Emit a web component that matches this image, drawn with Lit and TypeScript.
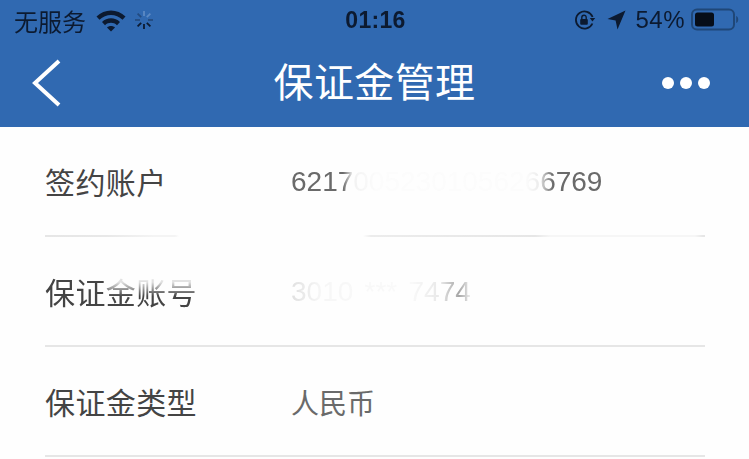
import { LitElement, html, css } from "lit";
import { customElement } from "lit/decorators.js";

@customElement("app-root")
export class AppRoot extends LitElement {
  static styles = css`
    :host { display: block; width: 749px; height: 459px; overflow: hidden; background: #fefefe;
      font-family: "Liberation Sans", "Noto Sans CJK SC", sans-serif; }
    header { height: 127px; background: #3069b1; display: flex; flex-direction: column; }
    .status { height: 40px; display: grid; grid-template-columns: 1fr auto 1fr; align-items: center;
      padding: 0 10px 0 14px; color: #0c1a30; font-size: 24px; filter: blur(.3px); }
    .left, .right { display: flex; align-items: center; }
    .right { justify-content: flex-end; }
    .carrier { margin-right: 10px; }
    .spin { margin-left: 8px; }
    .time { font-weight: 700; font-size: 23px; letter-spacing: .3px; margin-left: -2px; }
    .pct { margin: 0 6px 0 9px; letter-spacing: .5px; }
    .loc { margin-left: 11px; }
    .nav { flex: 1; display: grid; grid-template-columns: 1fr auto 1fr; align-items: center; padding: 0 39px 1px 32px; }
    .title { color: #fff; font-size: 40px; line-height: 48px; letter-spacing: .4px; margin-left: 7px; }
    .more { justify-self: end; display: flex; gap: 6px; }
    .more i { width: 12px; height: 12px; border-radius: 50%; background: #fff; display: block; }
    .row { height: 108px; padding: 0 44px 0 45px; display: flex; align-items: center; }
    .label { width: 246px; font-size: 30px; letter-spacing: .4px; color: #444; white-space: nowrap; }
    .value { font-size: 28px; color: #6a6a6a; white-space: nowrap; margin-top: 2px; }
    .rule { height: 2px; margin: 0 44px 0 45px; background: #e6e6e6; }
    .v1 { -webkit-mask-image: linear-gradient(90deg, #000 0, #000 52px, rgba(0,0,0,.08) 62px, rgba(0,0,0,.015) 85px, rgba(0,0,0,.015) 235px, rgba(0,0,0,.12) 248px, #000 262px);
      mask-image: linear-gradient(90deg, #000 0, #000 52px, rgba(0,0,0,.08) 62px, rgba(0,0,0,.015) 85px, rgba(0,0,0,.015) 235px, rgba(0,0,0,.12) 248px, #000 262px); }
    .v2 { word-spacing: 3.5px;
      -webkit-mask-image: linear-gradient(90deg, rgba(0,0,0,.2) 0, rgba(0,0,0,.05) 30px, rgba(0,0,0,.03) 120px, rgba(0,0,0,.15) 150px, rgba(0,0,0,.6) 168px, rgba(0,0,0,.12) 179px);
      mask-image: linear-gradient(90deg, rgba(0,0,0,.2) 0, rgba(0,0,0,.05) 30px, rgba(0,0,0,.03) 120px, rgba(0,0,0,.15) 150px, rgba(0,0,0,.6) 168px, rgba(0,0,0,.12) 179px); }
    .l2 { -webkit-mask-image: linear-gradient(90deg, #000 0, #000 60px, transparent 64px), linear-gradient(180deg, rgba(0,0,0,.15) 30%, #000 62%);
      mask-image: linear-gradient(90deg, #000 0, #000 60px, transparent 64px), linear-gradient(180deg, rgba(0,0,0,.15) 30%, #000 62%); }
    .r1 { background: linear-gradient(90deg, #e6e6e6 0, #e8e8e8 60px, #f4f4f4 110px, #f4f4f4 130px, #fefefe 134px,
      #fefefe 318px, #ececec 326px, #e6e6e6 490px, #f6f6f6 505px, #f6f6f6 650px, #e6e6e6 658px); }
  `;

  render() {
    return html`
      <header>
        <div class="status">
          <div class="left">
            <span class="carrier">无服务</span>
            <svg width="30" height="24" viewBox="0 0 30 24" fill="#0c1a30">
              <path d="M0.5 8.5 C8.5 0.5 21.5 0.5 29.5 8.5 L26.500 11.800 C20 5.500 10 5.500 3.500 11.800 Z"/>
              <path d="M6 14 C11 9 19 9 24 14 L21 17.200 C17.500 14 12.500 14 9 17.200 Z"/>
              <path d="M11 19.500 C13 17.500 17 17.500 19 19.500 L15 23.500 Z"/>
            </svg>
            <svg class="spin" width="20" height="20" viewBox="0 0 20 20" stroke-width="1.8" stroke-linecap="butt">
              <g stroke="#0c1a30"><path d="M10 14v5"/><path d="M7.200 12.800 3.600 16.400"/><path d="M12.800 12.800l3.600 3.600"/></g>
              <g stroke="#234b80"><path d="M6 10H1"/><path d="M14 10h5"/><path d="M7.200 7.200 3.600 3.600"/></g>
              <g stroke="#5c8ac4"><path d="M10 6V1"/><path d="M12.800 7.200l3.600-3.600"/></g>
            </svg>
          </div>
          <div class="time">01:16</div>
          <div class="right">
            <svg width="22" height="20" viewBox="0 0 22 20" fill="none" stroke="#0c1a30" stroke-width="1.8">
              <path d="M18.400 13.500A8.600 8.600 0 1 1 18.600 7"/>
              <path d="M15.800 8h5.400l-2.700 3.600Z" fill="#0c1a30" stroke="none"/>
              <rect x="6.200" y="9" width="7.600" height="5.800" rx="1" fill="#0c1a30" stroke="none"/>
              <path d="M7.800 9V7.400a2.200 2.200 0 0 1 4.400 0V9" stroke-width="1.400"/>
            </svg>
            <svg class="loc" width="19" height="20" viewBox="0 0 19 20" fill="#0c1a30"><path d="M18.500 0.500 10.500 19.500 8.600 10.600 0.500 9Z"/></svg>
            <span class="pct">54%</span>
            <svg width="48" height="24" viewBox="0 0 48 24">
              <rect x="1" y="1.500" width="42" height="20" rx="5" fill="none" stroke="#1f4778" stroke-width="2"/>
              <rect x="4" y="4.500" width="19" height="14" rx="2.500" fill="#060d18"/>
              <path d="M45.200 8v7c1.300-.4 2-1.800 2-3.500S46.500 8.400 45.200 8Z" fill="#1f4778"/>
            </svg>
          </div>
        </div>
        <div class="nav">
          <svg width="30" height="50" viewBox="0 0 30 50" fill="none" stroke="#fff" stroke-width="4"><path d="M27 3 3 25 27 47"/></svg>
          <div class="title">保证金管理</div>
          <div class="more"><i></i><i></i><i></i></div>
        </div>
      </header>
      <div class="row"><span class="label">签约账户</span><span class="value v1">62170052301056266769</span></div>
      <div class="rule r1"></div>
      <div class="row"><span class="label l2">保证金账号</span><span class="value v2">3010 *** 7474</span></div>
      <div class="rule"></div>
      <div class="row"><span class="label">保证金类型</span><span class="value">人民币</span></div>
      <div class="rule"></div>
    `;
  }
}
